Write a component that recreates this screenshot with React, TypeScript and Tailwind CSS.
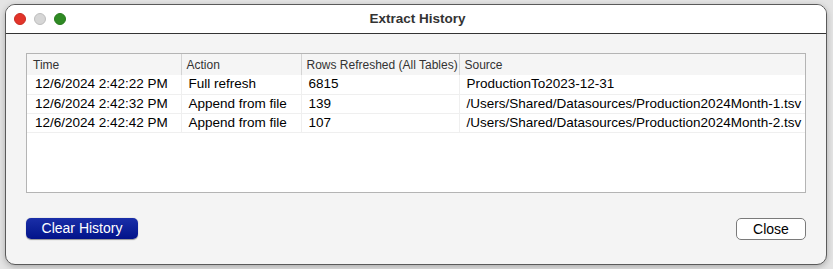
import React from 'react'

const rows = [
  { time: '12/6/2024 2:42:22 PM', action: 'Full refresh', count: '6815', source: 'ProductionTo2023-12-31' },
  { time: '12/6/2024 2:42:32 PM', action: 'Append from file', count: '139', source: '/Users/Shared/Datasources/Production2024Month-1.tsv' },
  { time: '12/6/2024 2:42:42 PM', action: 'Append from file', count: '107', source: '/Users/Shared/Datasources/Production2024Month-2.tsv' },
]

const cols = ['w-[154px]', 'w-[120px]', 'w-[158px]', '']

export default function App() {
  return (
    <div
      className="w-[833px] h-[269px] bg-[#e4e4e4] pl-[5px] pt-[4px] overflow-hidden"
      style={{ fontFamily: '"Liberation Sans", Arial, sans-serif' }}
    >
      <div className="w-[822px] h-[261px] rounded-[10px] border border-[#5a5a5a] bg-[#f4f4f4] overflow-hidden flex flex-col shadow-[0_2px_6px_rgba(0,0,0,0.25)]">
        {/* title bar */}
        <div className="relative h-[29px] shrink-0 bg-white border-b border-[#333] flex items-center justify-center">
          <div className="absolute left-[8px] top-[8px] flex gap-[8px]">
            <span className="w-[12px] h-[12px] rounded-full bg-[#e2342a] border border-[#c92b22]" />
            <span className="w-[12px] h-[12px] rounded-full bg-[#d6d6d6] border border-[#bdbdbd]" />
            <span className="w-[12px] h-[12px] rounded-full bg-[#2f8a24] border border-[#277a1d]" />
          </div>
          <span className="text-[13.5px] font-bold text-[#333] ml-[3px]">Extract History</span>
        </div>

        {/* body */}
        <div className="flex-1 flex flex-col px-[20px] pt-[19px]">
          <div className="h-[140px] border border-[#b4b4b4] bg-white">
            <table className="w-full table-fixed border-collapse">
              <thead>
                <tr className="bg-[#f5f5f5]">
                  {['Time', 'Action', 'Rows Refreshed (All Tables)', 'Source'].map((h, i) => (
                    <th
                      key={h}
                      className={`${cols[i]} h-[21px] p-0 text-left font-normal text-[12px] leading-[20px] text-[#333] ${i > 0 ? 'border-l border-[#d4d4d4]' : ''}`}
                    >
                      <span className={i === 0 ? 'pl-[6px]' : 'pl-[5px]'}>{h}</span>
                    </th>
                  ))}
                </tr>
              </thead>
              <tbody>
                {rows.map((r) => (
                  <tr key={r.time} className="border-b border-[#efefef]">
                    <td className="h-[19px] p-0 pl-[8px] text-[13.5px] leading-[18px] text-black whitespace-nowrap">{r.time}</td>
                    <td className="h-[19px] p-0 pl-[7px] text-[13.5px] leading-[18px] text-black border-l border-[#efefef] whitespace-nowrap">{r.action}</td>
                    <td className="h-[19px] p-0 pl-[7px] text-[13.5px] leading-[18px] text-black border-l border-[#efefef] whitespace-nowrap">{r.count}</td>
                    <td className="h-[19px] p-0 pl-[7px] text-[13.5px] leading-[18px] text-black border-l border-[#efefef] whitespace-nowrap">{r.source}</td>
                  </tr>
                ))}
              </tbody>
            </table>
          </div>

          <div className="flex justify-between mt-[25px]">
            <button className="w-[112px] h-[21px] rounded-[5px] bg-gradient-to-b from-[#1a2ea8] to-[#03128a] text-white text-[14px] leading-[21px] shadow-[0_0.5px_1px_rgba(0,0,0,0.4)]">
              Clear History
            </button>
            <button className="w-[70px] h-[22px] rounded-[5px] bg-white border border-[#7a7a7a] text-black text-[14px] leading-[20px]">
              Close
            </button>
          </div>
        </div>
      </div>
    </div>
  )
}
